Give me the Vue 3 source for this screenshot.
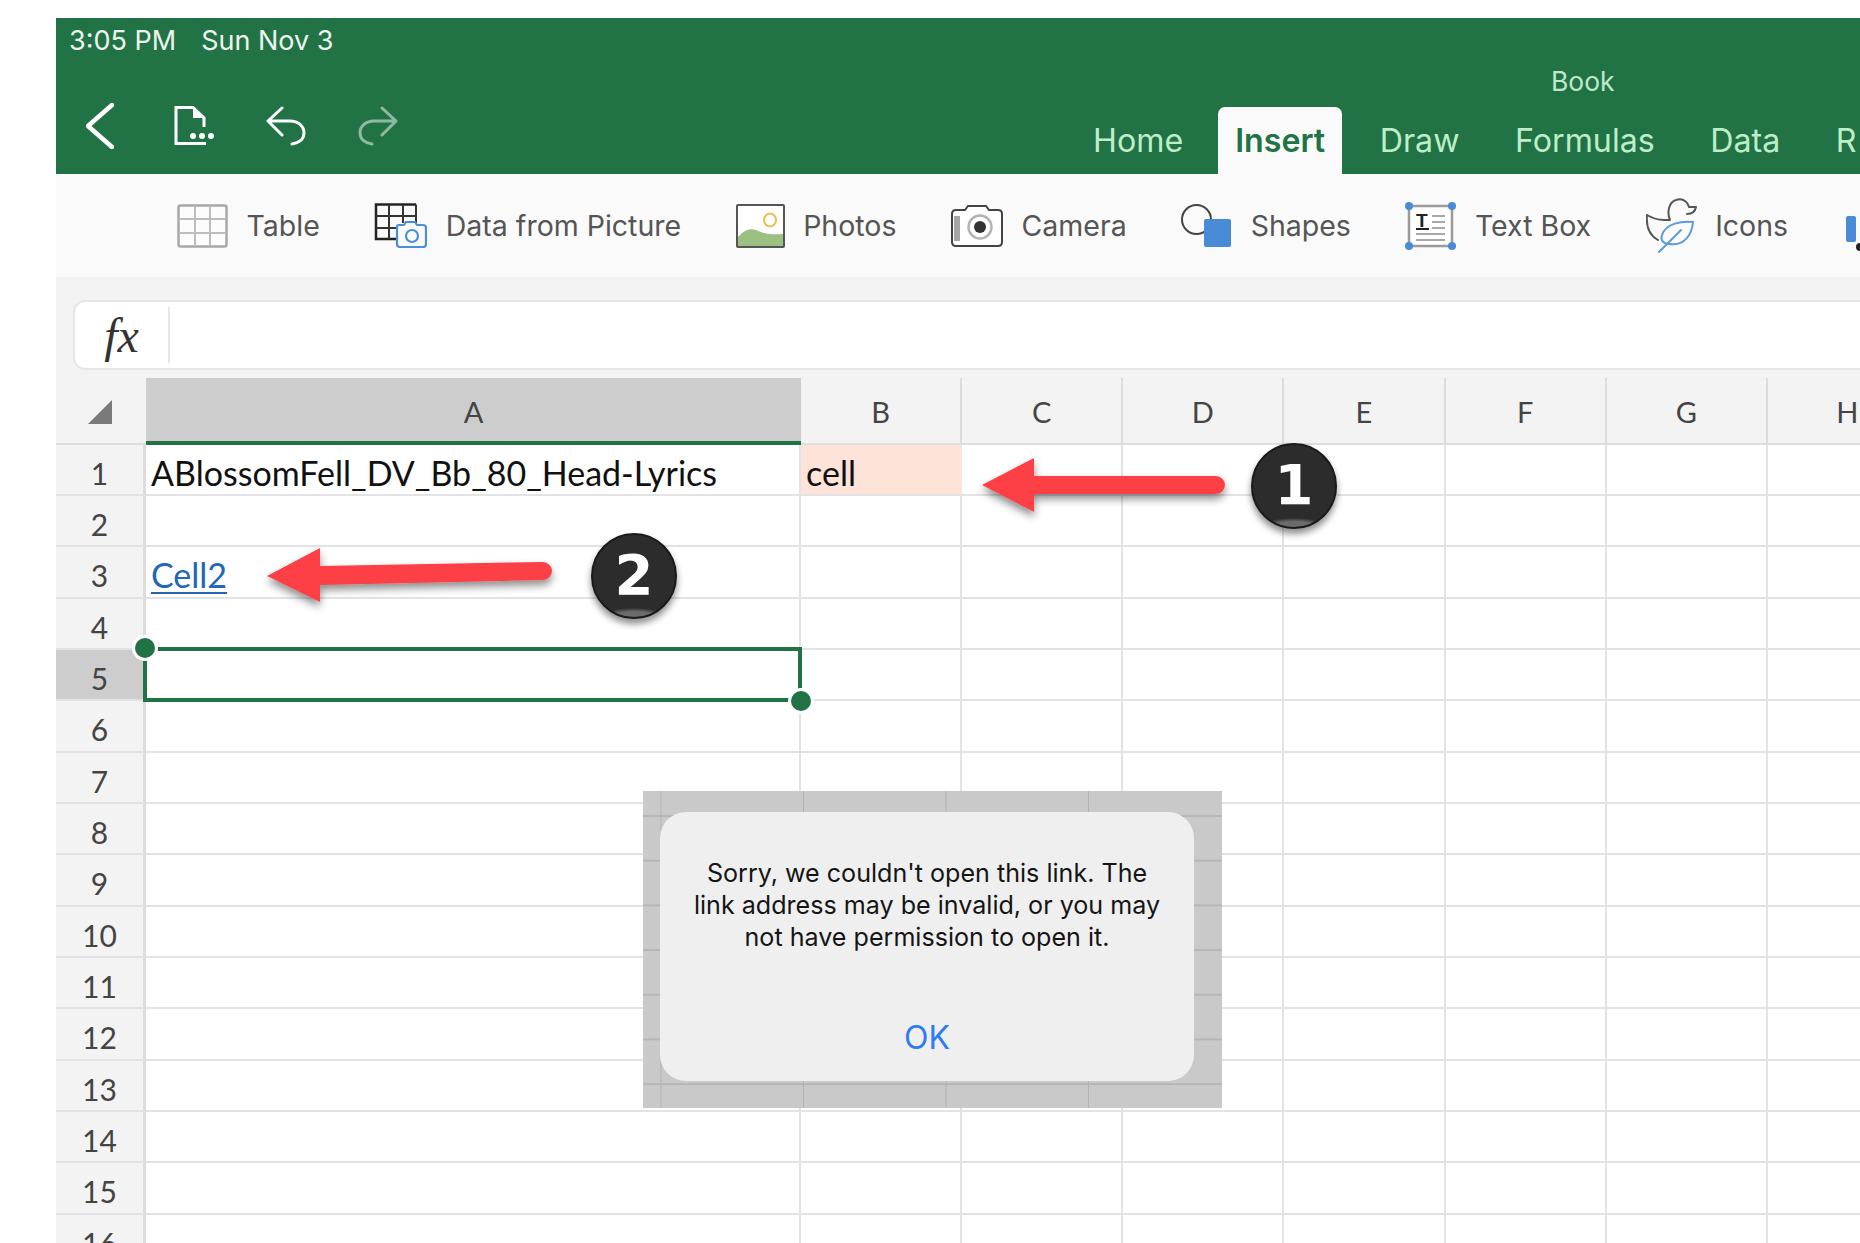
<script setup>
const columns = ['A', 'B', 'C', 'D', 'E', 'F', 'G', 'H']
const rows = Array.from({ length: 16 }, (_, i) => i + 1)
const tabs = ['Home', 'Insert', 'Draw', 'Formulas', 'Data', 'R']
const cellText = { A1: 'ABlossomFell_DV_Bb_80_Head-Lyrics', B1: 'cell', A3: 'Cell2' }
</script>

<template>
  <div class="page">
    <header class="header">
      <div class="status">
        <span>3:05 PM</span>
        <span>Sun Nov 3</span>
      </div>
      <div class="title">Book</div>
      <div class="actions">
        <svg class="back" width="28" height="46" viewBox="0 0 28 46" fill="none"><path d="M26 2 2 23l24 21" stroke="#fff" stroke-width="4.5" stroke-linecap="round" stroke-linejoin="round"/></svg>
        <svg class="doc" width="42" height="40" viewBox="0 0 42 40" fill="none"><path d="M30 21V12L19 1.5H2V37.5H32" stroke="#fff" stroke-width="3"/><path d="M19 1.5V12H30Z" fill="#fff"/><circle cx="19" cy="30" r="3" fill="#fff"/><circle cx="28" cy="30" r="3" fill="#fff"/><circle cx="37" cy="30" r="3" fill="#fff"/></svg>
        <svg class="undo" width="40" height="40" viewBox="0 0 40 40" fill="none"><path d="M16 2 2 15l14 14M2 15h22c8 0 14 5 14 12 0 6-5 10-12 11" stroke="#fff" stroke-width="3" stroke-linecap="round" stroke-linejoin="round"/></svg>
        <svg class="redo" width="40" height="40" viewBox="0 0 40 40" fill="none"><path d="M24 2l14 13-14 14M38 15H16C8 15 2 20 2 27c0 6 5 10 12 11" stroke="#fff" stroke-opacity=".5" stroke-width="3" stroke-linecap="round" stroke-linejoin="round"/></svg>
      </div>
      <nav class="tabs">
        <span v-for="tab in tabs" :key="tab" class="tab" :class="{ active: tab === 'Insert' }">{{ tab }}</span>
      </nav>
    </header>

    <div class="toolbar">
      <div class="tool">
        <svg width="51" height="44" viewBox="0 0 51 44" fill="none"><rect x="1.500" y="1.500" width="48" height="41" rx="2" fill="#fcfcfc" stroke="#a8a8a8" stroke-width="2.500"/><path d="M18 2v40M33 2v40M2 15h47M2 29h47" stroke="#bdbdbd" stroke-width="2"/></svg>
        <span>Table</span>
      </div>
      <div class="tool">
        <svg width="53" height="45" viewBox="0 0 53 45" fill="none"><path d="M42 1.500H2V36H22" stroke="#222" stroke-width="2.500"/><path d="M42 1.500V20M15 2V36M29 2V20M2 13H42M2 25H22" stroke="#333" stroke-width="2"/><path d="M25 22h5l2-3h9l2 3h6q3 0 3 3v16q0 3-3 3H26q-3 0-3-3V24q0-2 2-2Z" fill="#fbfbfb" stroke="#4a90d9" stroke-width="2.200"/><circle cx="38" cy="33" r="6" stroke="#4a90d9" stroke-width="2.200"/></svg>
        <span>Data from Picture</span>
      </div>
      <div class="tool">
        <svg width="49" height="44" viewBox="0 0 49 44" fill="none"><rect x="1" y="1" width="47" height="42" fill="#fff"/><path d="M2 33C8 26 14 24 20 26c8 4 16 5 27 4v12H2Z" fill="#9cc081"/><ellipse cx="34" cy="16" rx="6" ry="6.500" stroke="#e9c25b" stroke-width="2.200"/><rect x="1" y="1" width="47" height="42" rx="1" stroke="#555" stroke-width="2"/></svg>
        <span>Photos</span>
      </div>
      <div class="tool">
        <svg width="52" height="44" viewBox="0 0 52 44" fill="none"><path d="M6 6h8l3-4h18l3 4h9q4 0 4 4v28q0 4-4 4H5q-4 0-4-4V10q0-4 4-4Z" fill="#fff" stroke="#444" stroke-width="2"/><rect x="3" y="12" width="6" height="25" fill="#a6a6a6"/><circle cx="29" cy="23" r="11.500" stroke="#b4b4b4" stroke-width="2.500"/><circle cx="29" cy="23" r="6" fill="#333"/></svg>
        <span>Camera</span>
      </div>
      <div class="tool">
        <svg width="51" height="44" viewBox="0 0 51 44" fill="none"><circle cx="15.500" cy="15.500" r="14.500" stroke="#444" stroke-width="2"/><rect x="23" y="15" width="27" height="28" rx="2" fill="#4a8bd8"/></svg>
        <span>Shapes</span>
      </div>
      <div class="tool">
        <svg width="51" height="48" viewBox="0 0 51 48" fill="none"><rect x="4" y="4" width="43" height="40" fill="#fff" stroke="#9a9a9a" stroke-width="2.500"/><text x="11" y="25" font-family="Liberation Sans" font-weight="700" font-size="19" fill="#222">T</text><path d="M11 27h13" stroke="#222" stroke-width="2"/><path d="M27 14h13M27 20h13M27 26h13M11 32h29M11 38h29" stroke="#a8a8a8" stroke-width="2"/><g fill="#4a8bd8"><circle cx="4" cy="4" r="4"/><circle cx="47" cy="4" r="4"/><circle cx="4" cy="44" r="4"/><circle cx="47" cy="44" r="4"/></g></svg>
        <span>Text Box</span>
      </div>
      <div class="tool">
        <svg class="icons-glyph" width="51" height="56" viewBox="0 0 51 56" fill="none"><path d="M1 17c5 3 9 5 17 5h6c-3-7-2-19 8-20.500 6-1 10 3 11 7.500h7c-1 5-5 7-9 7M1 17c-1 11 2 20 11 25" stroke="#555" stroke-width="2" stroke-linecap="round" stroke-linejoin="round"/><path d="M47 24c-11-1-27 1-31 13-2 6 2 9 8 9 14 2 22-9 23-22Z" fill="#fbfbfb" stroke="#5a9bd8" stroke-width="2"/><path d="M13 54l22-22" stroke="#5a9bd8" stroke-width="2" stroke-linecap="round"/></svg>
        <span>Icons</span>
      </div>
      <svg class="cutoff" width="17" height="38" viewBox="0 0 17 38"><rect width="10" height="26" rx="2" fill="#4a8bd8"/><circle cx="14" cy="31" r="4" fill="#222"/></svg>
    </div>

    <div class="workspace">
      <div class="formula">
        <span class="fx">fx</span>
        <span class="divider"></span>
      </div>

      <div class="sheet">
        <div class="corner">
          <svg width="24" height="24" viewBox="0 0 24 24"><path d="M24 0V24H0Z" fill="#7a7a7a"/></svg>
        </div>
        <div v-for="col in columns" :key="col" class="col-head" :class="{ picked: col === 'A' }">{{ col }}</div>
        <template v-for="row in rows" :key="row">
          <div class="row-head" :class="{ picked: row === 5 }">{{ row }}</div>
          <div
            v-for="col in columns"
            :key="col + row"
            class="cell"
            :class="{ tint: col + row === 'B1', link: col + row === 'A3', current: col + row === 'A5' }"
          >
            <span v-if="cellText[col + row]">{{ cellText[col + row] }}</span>
            <template v-if="col + row === 'A5'">
              <i class="handle start"></i>
              <i class="handle end"></i>
            </template>
          </div>
        </template>
      </div>
    </div>

    <svg class="annotations" width="1860" height="1243" viewBox="0 0 1860 1243" fill="none">
      <defs>
        <filter id="arrow-shadow" x="-10%" y="-30%" width="120%" height="170%">
          <feDropShadow dx="0" dy="5" stdDeviation="4" flood-color="#000" flood-opacity=".45"/>
        </filter>
      </defs>
      <path d="M982 485 1034 458V476H1216a9 9 0 0 1 0 18H1034V512Z" fill="#fc4045" filter="url(#arrow-shadow)"/>
      <path d="M267 576 320 548V566L543 562a9 9 0 0 1 0 18L320 585V602Z" fill="#fc4045" filter="url(#arrow-shadow)"/>
    </svg>

    <div class="badge one">1</div>
    <div class="badge two">2</div>

    <div class="alert-backdrop">
      <div class="alert">
        <p>Sorry, we couldn't open this link. The<br>link address may be invalid, or you may<br>not have permission to open it.</p>
        <span class="ok">OK</span>
      </div>
    </div>
  </div>
</template>

<style scoped>
.page {
  position: relative;
  width: 1860px;
  height: 1243px;
  padding: 18px 0 0 56px;
  box-sizing: border-box;
  overflow: hidden;
  background: #fff;
  font-family: Inter, "Liberation Sans", sans-serif;
}
.header {
  height: 156px;
  background: #217346;
  display: grid;
  grid-template-rows: 44px 45px 67px;
  grid-template-columns: 1fr;
  color: #fff;
}
.status {
  grid-row: 1;
  grid-column: 1;
  padding: 7px 0 0 13px;
  display: flex;
  gap: 25px;
  font-size: 27px;
  line-height: 32px;
  color: #eef5ef;
}
.title {
  grid-row: 2;
  grid-column: 1;
  padding: 4px 0 0 1495px;
  font-size: 26.500px;
  line-height: 30px;
  color: #bfe9c9;
}
.actions {
  grid-row: 2 / 4;
  grid-column: 1;
  align-self: start;
  padding: 0 0 0 30px;
  margin-top: 40px;
  display: flex;
  align-items: flex-start;
}
.back { margin-top: 1px; }
.doc { margin-left: 60px; margin-top: 4px; }
.undo { margin-left: 50px; margin-top: 4px; }
.redo { margin-left: 52px; margin-top: 4px; }
.tabs {
  grid-row: 3;
  grid-column: 1;
  display: flex;
  gap: 55.500px;
  padding-left: 1037px;
  align-items: stretch;
  white-space: nowrap;
}
.tab {
  font-size: 32.200px;
  line-height: 67px;
  color: #bdeec8;
}
.tab.active {
  margin: 0 -18px 0 -20.500px;
  padding: 0 17px;
  background: #fbfafa;
  color: #217346;
  font-weight: 600;
  border-radius: 7px 7px 0 0;
}
.toolbar {
  height: 103px;
  background: #fbfafa;
  display: flex;
  align-items: center;
  gap: 54.500px;
  padding-left: 121px;
  white-space: nowrap;
  color: #555;
  font-size: 28.500px;
}
.tool {
  display: flex;
  align-items: center;
  gap: 18.500px;
}
.cutoff {
  flex: none;
  margin-left: 3px;
  margin-top: 19px;
}
.workspace {
  background: #f3f3f3;
  padding-top: 23px;
}
.formula {
  height: 70px;
  margin-left: 17px;
  box-sizing: border-box;
  background: #fff;
  border: 2px solid #e6e6e6;
  border-right: 0;
  border-radius: 12px 0 0 12px;
  display: flex;
  align-items: center;
}
.fx {
  width: 93px;
  text-align: center;
  font: italic 48px "Liberation Serif", serif;
  color: #333;
}
.divider {
  width: 2px;
  height: 56px;
  background: #e6e6e6;
}
.sheet {
  margin-top: 8px;
  width: 1960px;
  display: grid;
  grid-template-columns: 90px 655px repeat(7, 161.150px);
  grid-template-rows: 66.500px;
  grid-auto-rows: 51.350px;
  background: #fff;
  font-family: Lato, "Liberation Sans", sans-serif;
}
.corner {
  background: #f3f3f3;
  border-bottom: 2px solid #dedee0;
  display: flex;
  padding: 22px 0 0 32px;
  box-sizing: border-box;
}
.col-head {
  background: #f3f3f3;
  border-right: 2px solid #dcdcde;
  border-bottom: 2px solid #dedee0;
  box-sizing: border-box;
  text-align: center;
  font-size: 29px;
  line-height: 68px;
  color: #444;
}
.col-head.picked {
  background: #cdcdcd;
  border-right: 0;
  border-bottom: 4px solid #217346;
}
.row-head {
  background: #f3f3f3;
  border-right: 3px solid #dcdcde;
  border-bottom: 2px solid #e2e2e4;
  box-sizing: border-box;
  text-align: center;
  font-size: 30px;
  line-height: 57px;
  color: #444;
  overflow: hidden;
}
.row-head.picked { background: #cdcdcd; }
.cell {
  position: relative;
  box-sizing: border-box;
  border-right: 2px solid #e3e3e6;
  border-bottom: 2px solid #e3e3e6;
  padding-left: 5px;
  font-size: 34px;
  line-height: 56px;
  color: #111;
  white-space: nowrap;
}
.cell.tint {
  background: #fde3d8;
  border-right-color: #fde3d8;
}
.cell.link {
  color: #2266b5;
  text-decoration: underline;
  text-underline-offset: 4px;
  text-decoration-thickness: 2px;
}
.cell.current::after {
  content: "";
  position: absolute;
  inset: -3px -3px -3px -3px;
  border: 4px solid #217346;
}
.handle {
  position: absolute;
  z-index: 1;
  width: 20px;
  height: 20px;
  border-radius: 50%;
  background: #217346;
  box-shadow: 0 0 0 3px #fff;
}
.handle.start { left: -11px; top: -12px; }
.handle.end { right: -12px; bottom: -12px; }
.annotations {
  position: absolute;
  left: 0;
  top: 0;
  pointer-events: none;
}
.badge {
  position: absolute;
  width: 86px;
  height: 86px;
  box-sizing: border-box;
  border-radius: 50%;
  background: radial-gradient(ellipse 38px 10px at 50% 100%, #6b6b6b 0 55%, transparent 90%), #2c2c2c;
  border: 2px solid #1a1a1a;
  box-shadow: 0 5px 7px rgba(0, 0, 0, .45);
  color: #fff;
  text-align: center;
  font: 700 56px/80px "DejaVu Sans", sans-serif;
}
.badge.one { left: 1251px; top: 443px; }
.badge.two { left: 591px; top: 533px; }
.alert-backdrop {
  position: absolute;
  left: 643px;
  top: 791px;
  width: 579px;
  height: 317px;
  padding: 21px 0 0 17px;
  box-sizing: border-box;
  background-color: #c9c9c9;
  background-image:
    linear-gradient(to right, #b2b2b2 1px, transparent 1px),
    linear-gradient(to bottom, #b6b6b6 2px, transparent 2px);
  background-size: 142.500px 100%, 100% 44.700px;
  background-position: 17.500px 0, 0 24px;
}
.alert {
  width: 534px;
  height: 269px;
  border-radius: 26px;
  background: #efeff0;
  display: flex;
  flex-direction: column;
  align-items: center;
}
.alert p {
  margin: 45px 0 0;
  text-align: center;
  font-size: 25.100px;
  line-height: 32px;
  color: #151515;
}
.ok {
  margin-top: 66px;
  font-size: 32px;
  line-height: 38px;
  color: #2f7bf0;
}
</style>

<style>
html, body { margin: 0; background: #fff; }
</style>
